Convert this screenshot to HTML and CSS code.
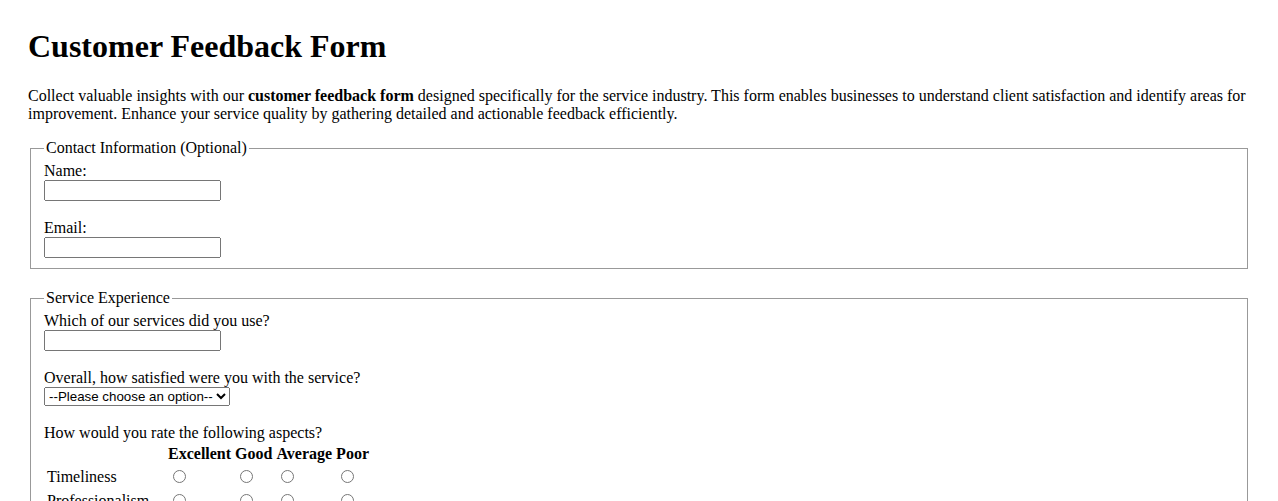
FILE: index.html
```html
<!DOCTYPE html>
<html lang="en">
<head>
<meta charset="utf-8">
<title>Customer Feedback Form</title>
<link rel="stylesheet" href="styles.css">
</head>
<body>
<h1 class="title">Customer Feedback Form</h1>
<p class="intro">Collect valuable insights with our <strong>customer feedback form</strong> designed specifically for the service industry. This form enables businesses to understand client satisfaction and identify areas for improvement. Enhance your service quality by gathering detailed and actionable feedback efficiently.</p>
<form class="form">
  <fieldset class="group">
    <legend>Contact Information (Optional)</legend>
    <label for="name">Name:</label><br>
    <input class="field" type="text" id="name" name="name"><br><br>
    <label for="email">Email:</label><br>
    <input class="field" type="email" id="email" name="email">
  </fieldset>
  <fieldset class="group">
    <legend>Service Experience</legend>
    <label for="service">Which of our services did you use?</label><br>
    <input class="field" type="text" id="service" name="service"><br><br>
    <label for="satisfaction">Overall, how satisfied were you with the service?</label><br>
    <select class="choice" id="satisfaction" name="satisfaction">
      <option value="">--Please choose an option--</option>
      <option>Very satisfied</option>
      <option>Satisfied</option>
      <option>Neutral</option>
      <option>Dissatisfied</option>
    </select><br><br>
    <p class="question">How would you rate the following aspects?</p>
    <table class="rating">
      <tr><th class="aspect"></th><th>Excellent</th><th>Good</th><th>Average</th><th>Poor</th></tr>
      <tr><td>Timeliness</td><td><input type="radio" name="t"></td><td><input type="radio" name="t"></td><td><input type="radio" name="t"></td><td><input type="radio" name="t"></td></tr>
      <tr><td>Professionalism</td><td><input type="radio" name="p"></td><td><input type="radio" name="p"></td><td><input type="radio" name="p"></td><td><input type="radio" name="p"></td></tr>
      <tr><td>Quality of Service</td><td><input type="radio" name="q"></td><td><input type="radio" name="q"></td><td><input type="radio" name="q"></td><td><input type="radio" name="q"></td></tr>
      <tr><td>Value for Money</td><td><input type="radio" name="v"></td><td><input type="radio" name="v"></td><td><input type="radio" name="v"></td><td><input type="radio" name="v"></td></tr>
    </table>
  </fieldset>
</form>
</body>
</html>
```
FILE: styles.css
```css
body {
  margin: 0;
  padding: 7px 28px 8px 28px;
  font-family: "Liberation Serif", "Times New Roman", serif;
  font-size: 16px;
  color: #000;
  background: #fff;
}
.title {
  font-size: 32px;
  font-weight: bold;
  margin: 21px 0 22px 0;
}
.intro {
  margin: 16px 0;
}
.group {
  margin: 0 2px 20px 2px;
  border: 1px solid #999;
  padding: 5px 12px 10px 13px;
}
.group legend {
  padding: 0 2px;
}
.field {
  box-sizing: border-box;
  width: 177px;
  height: 21px;
  font-family: "Liberation Sans", Arial, sans-serif;
  font-size: 13.33px;
}
.choice {
  font-family: "Liberation Sans", Arial, sans-serif;
  font-size: 13.33px;
}
.question {
  margin: 0;
}
.aspect {
  width: 117px;
}
```
